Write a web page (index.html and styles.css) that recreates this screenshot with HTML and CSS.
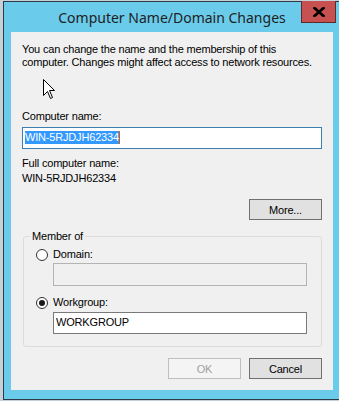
FILE: index.html
```html
<!DOCTYPE html>
<html>
<head>
<meta charset="utf-8">
<link rel="stylesheet" href="styles.css">
</head>
<body>
<div class="window">
  <div class="titlebar">
    <span class="title">Computer Name/Domain Changes</span>
    <div class="close"><svg width="12" height="10" viewBox="0 0 12 10"><path d="M1.5 1 L10.5 9 M10.5 1 L1.5 9" stroke="#000" stroke-width="2.6" stroke-linecap="square"/></svg></div>
  </div>
  <div class="client">
    <p class="intro">You can change the name and the membership of this<br>computer. Changes might affect access to network resources.</p>
    <div class="lbl name-lbl">Computer name:</div>
    <div class="input focused"><span class="sel">WIN-5RJDJH62334</span><span class="caret"></span></div>
    <div class="lbl full-lbl">Full computer name:</div>
    <div class="lbl value">WIN-5RJDJH62334</div>
    <div class="more-row"><button class="btn">More...</button></div>
    <fieldset class="group">
      <legend>Member of</legend>
      <div class="radio-row first"><span class="radio"></span><span>Domain:</span></div>
      <div class="input sub disabled"></div>
      <div class="radio-row"><span class="radio checked"></span><span>Workgroup:</span></div>
      <div class="input sub">WORKGROUP</div>
    </fieldset>
    <div class="actions">
      <button class="btn off" disabled>OK</button>
      <button class="btn">Cancel</button>
    </div>
  </div>
</div>
<svg class="pointer" width="13" height="20" viewBox="0 0 13 20"><path d="M0.5 0.5 L0.5 16.5 L4.5 12.5 L7.5 19.5 L9.5 18.5 L6.5 11.5 L11.5 11.5 Z" fill="#fff" stroke="#000" stroke-width="1"/></svg>
</body>
</html>
```
FILE: styles.css
```css
html, body {
  margin: 0;
  padding: 0;
  height: 401px;
  overflow: hidden;
}
body {
  background: #c6d0d7;
  font-family: "Liberation Sans", Arial, sans-serif;
  font-size: 11px;
  letter-spacing: -0.18px;
  color: #000;
  position: relative;
}
.window {
  position: relative;
  margin: 1px 0 0 3px;
  width: 322px;
  border: 1px solid #2c3a46;
  background: #6bcbea;
  padding: 0 7px 9px 7px;
}
.titlebar {
  height: 30px;
  display: flex;
  align-items: center;
  justify-content: center;
}
.title {
  font-family: "Noto Sans", sans-serif;
  font-size: 14px;
  letter-spacing: 0;
  color: #1e1e1e;
  margin-top: 1px;
  white-space: nowrap;
}
.close {
  position: absolute;
  left: 297px;
  top: -1px;
  width: 33px;
  height: 21px;
  background: #c75050;
  border: 1px solid #5c2a2a;
  border-top: none;
  display: flex;
  align-items: center;
  justify-content: center;
}
.client {
  background: #f0f0f0;
  width: 300px;
  height: 358px;
  padding: 0 11px;
  overflow: hidden;
}
.intro {
  margin: 11px 0 0 0;
  line-height: 13px;
  white-space: nowrap;
}
.lbl { line-height: 13px; }
.name-lbl { margin-top: 41px; }
.input {
  box-sizing: border-box;
  height: 22px;
  border: 1px solid #7a7a7a;
  background: #fff;
  margin-top: 4px;
  padding: 3px 0 0 2px;
  line-height: 13px;
}
.input.focused {
  border-color: #3c7fb1;
  display: flex;
  align-items: flex-start;
}
.sel {
  background: #3399ff;
  color: #fff;
}
.caret {
  width: 1px;
  height: 13px;
  background: #e05a00;
}
.full-lbl { margin-top: 8px; }
.value { margin-top: 2px; }
.more-row {
  display: flex;
  justify-content: flex-end;
  margin-top: 14px;
}
.btn {
  box-sizing: border-box;
  width: 73px;
  height: 21px;
  margin: 0;
  padding: 0;
  background: #e1e1e1;
  border: 1px solid #707070;
  border-radius: 0;
  font-family: "Liberation Sans", Arial, sans-serif;
  font-size: 11px;
  letter-spacing: -0.18px;
  color: #000;
}
.btn.off {
  background: #f4f4f4;
  border-color: #bfbfbf;
  color: #a0a0a0;
}
.group {
  margin: 10px 0 0 1px;
  padding: 0 14px 12px 12px;
  border: 1px solid #dcdcdc;
  border-radius: 3px;
  box-sizing: border-box;
  width: 299px;
  min-width: 0;
}
.group legend {
  padding: 0 2px;
  margin-left: -6px;
  line-height: 13px;
}
.radio-row {
  display: flex;
  align-items: center;
  gap: 5px;
  line-height: 13px;
  height: 13px;
}
.radio-row.first { margin-top: 5px; }
.radio-row:not(.first) { margin-top: 10px; }
.radio {
  box-sizing: border-box;
  width: 12px;
  height: 12px;
  border: 1px solid #333;
  border-radius: 50%;
  background: #fff;
  display: flex;
  align-items: center;
  justify-content: center;
}
.radio.checked::after {
  content: "";
  width: 6px;
  height: 6px;
  border-radius: 50%;
  background: #1a1a1a;
}
.input.sub {
  margin-left: 17px;
  width: 254px;
  margin-top: 3px;
}
.input.sub.disabled {
  background: #f0f0f0;
  border-color: #b4b4b4;
  height: 23px;
  margin-top: 2px;
}
.actions {
  display: flex;
  justify-content: flex-end;
  gap: 8px;
  margin-top: 11px;
}
.pointer {
  position: absolute;
  left: 43px;
  top: 79px;
}
```
